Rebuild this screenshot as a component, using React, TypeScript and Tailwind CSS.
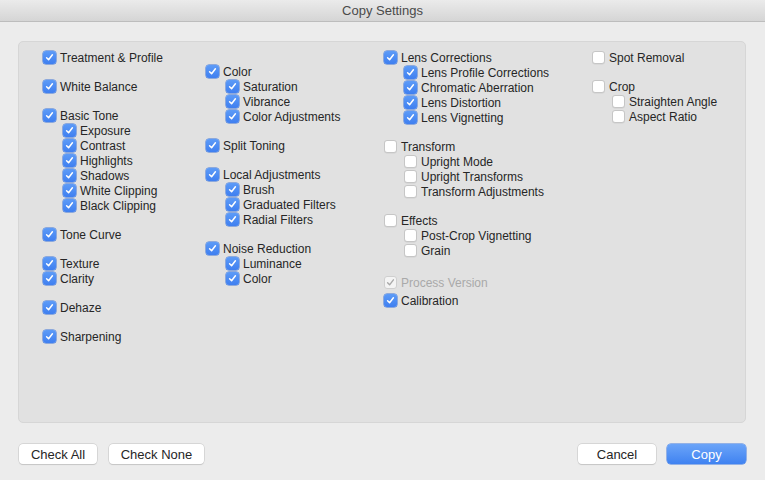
type Item = {
  label: string;
  checked?: boolean;
  disabled?: boolean;
  sub?: boolean;
  /** extra space above the row, in px class */
  gap?: string;
};

function Box({ checked, disabled }: { checked?: boolean; disabled?: boolean }) {
  if (disabled) {
    return (
      <span className="w-[13px] h-[13px] shrink-0 rounded-[3px] border border-[#cfcfcf] bg-[#f4f4f4] flex items-center justify-center">
        <svg width="9" height="9" viewBox="0 0 9 9" fill="none">
          <path d="M1.6 4.8 L3.6 6.8 L7.4 1.8" stroke="#a9a9a9" strokeWidth="1.4" strokeLinecap="round" strokeLinejoin="round" />
        </svg>
      </span>
    );
  }
  if (checked) {
    return (
      <span className="w-[13px] h-[13px] shrink-0 rounded-[3px] bg-gradient-to-b from-[#5d9bf7] to-[#3f7ff0] flex items-center justify-center shadow-[0_0_0_0.5px_#3a73d8]">
        <svg width="9" height="9" viewBox="0 0 9 9" fill="none">
          <path d="M1.6 4.8 L3.6 6.8 L7.4 1.8" stroke="#ffffff" strokeWidth="1.5" strokeLinecap="round" strokeLinejoin="round" />
        </svg>
      </span>
    );
  }
  return (
    <span className="w-[13px] h-[13px] shrink-0 rounded-[3px] bg-white border border-[#c6c6c6] shadow-[0_0.5px_0.5px_rgba(0,0,0,0.08)]" />
  );
}

function Row({ item }: { item: Item }) {
  return (
    <div className={`h-[15px] flex items-center gap-[4px] ${item.sub ? "pl-[20px]" : ""} ${item.gap ?? ""}`}>
      <Box checked={item.checked} disabled={item.disabled} />
      <span className={`text-[12px] leading-none whitespace-nowrap ${item.disabled ? "text-[#a9a9a9]" : "text-[#262626]"}`}>
        {item.label}
      </span>
    </div>
  );
}

function Column({ items, className }: { items: Item[]; className: string }) {
  return (
    <div className={`flex flex-col ${className}`}>
      {items.map((item) => (
        <Row key={item.label + (item.gap ?? "")} item={item} />
      ))}
    </div>
  );
}

const G = "mt-[14px]";

const COL1: Item[] = [
  { label: "Treatment & Profile", checked: true },
  { label: "White Balance", checked: true, gap: G },
  { label: "Basic Tone", checked: true, gap: G },
  { label: "Exposure", checked: true, sub: true },
  { label: "Contrast", checked: true, sub: true },
  { label: "Highlights", checked: true, sub: true },
  { label: "Shadows", checked: true, sub: true },
  { label: "White Clipping", checked: true, sub: true },
  { label: "Black Clipping", checked: true, sub: true },
  { label: "Tone Curve", checked: true, gap: G },
  { label: "Texture", checked: true, gap: G },
  { label: "Clarity", checked: true },
  { label: "Dehaze", checked: true, gap: G },
  { label: "Sharpening", checked: true, gap: G },
];

const COL2: Item[] = [
  { label: "Color", checked: true, gap: G },
  { label: "Saturation", checked: true, sub: true },
  { label: "Vibrance", checked: true, sub: true },
  { label: "Color Adjustments", checked: true, sub: true },
  { label: "Split Toning", checked: true, gap: G },
  { label: "Local Adjustments", checked: true, gap: G },
  { label: "Brush", checked: true, sub: true },
  { label: "Graduated Filters", checked: true, sub: true },
  { label: "Radial Filters", checked: true, sub: true },
  { label: "Noise Reduction", checked: true, gap: G },
  { label: "Luminance", checked: true, sub: true },
  { label: "Color ", checked: true, sub: true },
];

const COL3: Item[] = [
  { label: "Lens Corrections", checked: true },
  { label: "Lens Profile Corrections", checked: true, sub: true },
  { label: "Chromatic Aberration", checked: true, sub: true },
  { label: "Lens Distortion", checked: true, sub: true },
  { label: "Lens Vignetting", checked: true, sub: true },
  { label: "Transform", gap: G },
  { label: "Upright Mode", sub: true },
  { label: "Upright Transforms", sub: true },
  { label: "Transform Adjustments", sub: true },
  { label: "Effects", gap: G },
  { label: "Post-Crop Vignetting", sub: true },
  { label: "Grain", sub: true },
  { label: "Process Version", checked: true, disabled: true, gap: "mt-[17px]" },
  { label: "Calibration", checked: true, gap: "mt-[3px]" },
];

const COL4: Item[] = [
  { label: "Spot Removal" },
  { label: "Crop", gap: G },
  { label: "Straighten Angle", sub: true },
  { label: "Aspect Ratio", sub: true },
];

function Button({ label, primary, width }: { label: string; primary?: boolean; width: string }) {
  return (
    <button
      className={`h-[20px] ${width} rounded-[4px] text-[13px] leading-none flex items-center justify-center ${
        primary
          ? "bg-gradient-to-b from-[#6ba4f8] to-[#3f82f1] text-white shadow-[0_0_0_0.5px_#3a76e0]"
          : "bg-white text-[#262626] shadow-[0_0_0_0.5px_#c4c4c4,0_0.5px_1px_rgba(0,0,0,0.15)]"
      }`}
    >
      {label}
    </button>
  );
}

export default function App() {
  return (
    <div
      className="w-[765px] h-[480px] bg-[#ececec] flex flex-col overflow-hidden"
      style={{ fontFamily: '"Liberation Sans", Arial, sans-serif' }}
    >
      <div className="h-[22px] shrink-0 bg-gradient-to-b from-[#ebebeb] to-[#d5d5d5] border-b border-[#bdbdbd] flex items-center justify-center">
        <span className="text-[13px] text-[#4a4a4a] leading-none">Copy Settings</span>
      </div>

      <div className="px-[18px] pt-[19px]">
        <div className="h-[382px] w-[728px] rounded-[5px] bg-[#e1e1e1] border border-[#d6d6d6] pl-[24px] pt-[8px] flex">
          <Column items={COL1} className="w-[163px]" />
          <Column items={COL2} className="w-[178px]" />
          <Column items={COL3} className="w-[208px]" />
          <Column items={COL4} className="w-[150px]" />
        </div>
      </div>

      <div className="mt-[21px] px-[19px] flex items-center">
        <Button label="Check All" width="w-[78px]" />
        <div className="w-[12px]" />
        <Button label="Check None" width="w-[95px]" />
        <div className="flex-1" />
        <Button label="Cancel" width="w-[78px]" />
        <div className="w-[11px]" />
        <Button label="Copy" primary width="w-[79px]" />
      </div>
    </div>
  );
}
